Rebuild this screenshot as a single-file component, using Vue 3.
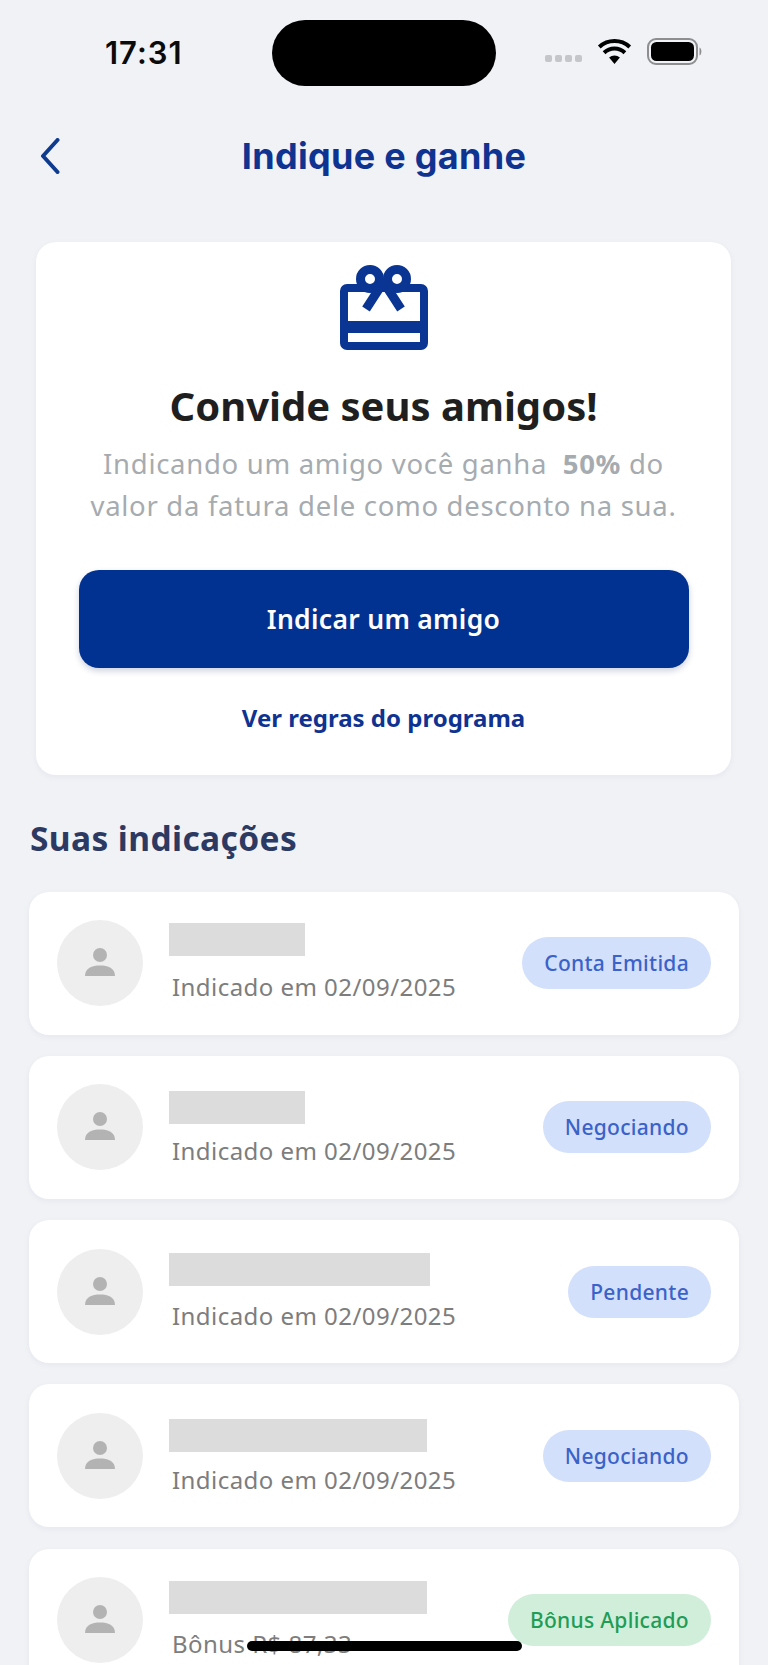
<script setup>
const items = [
  { id: 1, nameWidth: 136, nameShift: 0, sub: 'Indicado em 02/09/2025', badge: 'Conta Emitida', kind: 'blue' },
  { id: 2, nameWidth: 136, nameShift: 4, sub: 'Indicado em 02/09/2025', badge: 'Negociando', kind: 'blue' },
  { id: 3, nameWidth: 261, nameShift: 1, sub: 'Indicado em 02/09/2025', badge: 'Pendente', kind: 'blue' },
  { id: 4, nameWidth: 258, nameShift: 3, sub: 'Indicado em 02/09/2025', badge: 'Negociando', kind: 'blue' },
  { id: 5, nameWidth: 258, nameShift: 1, sub: 'Bônus R$ 87,33', badge: 'Bônus Aplicado', kind: 'green' }
]
</script>

<template>
  <div class="page">
    <div class="island"></div>
    <div class="status">
      <span class="time">17:31</span>
      <div class="status-right">
        <div class="dots"><i></i><i></i><i></i><i></i></div>
        <svg class="wifi" width="35" height="26" viewBox="0 0 34 26">
          <path d="M17 25 L11.600 18.600 A8 8 0 0 1 22.400 18.600 Z" fill="#000" />
          <path d="M6.600 13.800 A15 15 0 0 1 27.400 13.800" fill="none" stroke="#000" stroke-width="4" />
          <path d="M1.800 8 A22.500 22.500 0 0 1 32.200 8" fill="none" stroke="#000" stroke-width="4" />
        </svg>
        <svg class="battery" width="58" height="28" viewBox="0 0 56 28">
          <rect x="1" y="1" width="49" height="25" rx="8" fill="none" stroke="#8e8e90" stroke-width="2" />
          <rect x="4" y="4" width="43" height="19" rx="5.500" fill="#000" />
          <path d="M52.500 9.500 C55 10.500 55 16.500 52.500 17.500 Z" fill="#8e8e90" />
        </svg>
      </div>
    </div>

    <header class="nav">
      <svg class="back" width="20" height="36" viewBox="0 0 20 36">
        <path d="M17.500 2 L3 18 L17.500 34" fill="none" stroke="#0f3b8f" stroke-width="4" stroke-linecap="round" stroke-linejoin="round" />
      </svg>
      <h1 class="nav-title">Indique e ganhe</h1>
    </header>

    <section class="hero">
      <svg class="gift" width="90" height="86" viewBox="0 0 90 86">
        <path d="M8 19 H82 A7 7 0 0 1 89 26 V78 A7 7 0 0 1 82 85 H8 A7 7 0 0 1 1 78 V26 A7 7 0 0 1 8 19 Z M9 27 V56 H81 V27 Z M9 68 V77 H81 V68 Z" fill="#0a3593" fill-rule="evenodd" />
        <circle cx="31" cy="14" r="9.500" fill="#fff" stroke="#0a3593" stroke-width="9" />
        <circle cx="58" cy="14" r="9.500" fill="#fff" stroke="#0a3593" stroke-width="9" />
        <path d="M44.500 17 L27 44 M44.500 17 L62 44" stroke="#0a3593" stroke-width="9" fill="none" />
        <path d="M37 14 H52 L44.500 26 Z" fill="#0a3593" />
      </svg>
      <h2 class="hero-title">Convide seus amigos!</h2>
      <p class="hero-text">Indicando um amigo você ganha&nbsp; <b>50%</b> do<br />valor da fatura dele como desconto na sua.</p>
      <button class="cta">Indicar um amigo</button>
      <a class="rules">Ver regras do programa</a>
    </section>

    <h3 class="section-title">Suas indicações</h3>

    <div class="list">
      <article v-for="item in items" :key="item.id" class="row">
        <div class="avatar">
          <svg width="32" height="32" viewBox="0 0 32 32">
            <circle cx="16" cy="8" r="7" fill="#b3b3b3" />
            <path d="M1 29 C1 21 8 18.500 16 18.500 C24 18.500 31 21 31 29 Z" fill="#b3b3b3" />
          </svg>
        </div>
        <div class="info">
          <div class="redacted" :style="{ width: item.nameWidth + 'px', transform: 'translateY(' + item.nameShift + 'px)' }"></div>
          <div class="sub">{{ item.sub }}</div>
        </div>
        <span class="badge" :class="item.kind">{{ item.badge }}</span>
      </article>
    </div>

    <div class="home"></div>
  </div>
</template>

<style>
html, body { margin: 0; background: #f0f2f6; }
</style>

<style scoped>
.page {
  position: relative;
  width: 768px;
  height: 1665px;
  overflow: hidden;
  background: #f0f2f6;
  font-family: "Noto Sans", "Open Sans", sans-serif;
  box-sizing: border-box;
}
.island {
  position: absolute;
  left: 272px;
  top: 20px;
  width: 224px;
  height: 66px;
  border-radius: 33px;
  background: #000;
}
.status {
  display: flex;
  align-items: center;
  justify-content: space-between;
  height: 50px;
  padding: 27px 64px 0 105px;
}
.time {
  font-family: Inter, sans-serif;
  font-size: 31px;
  font-weight: 600;
  letter-spacing: 1px;
  color: #0b0b0b;
}
.status-right {
  display: flex;
  align-items: center;
}
.dots {
  display: flex;
  gap: 3px;
  margin-top: 12px;
  width: 52px;
}
.dots i {
  width: 7px;
  height: 7px;
  border-radius: 2px;
  background: #c4c6c9;
}
.wifi { margin-right: 14px; }
.nav {
  position: relative;
  display: flex;
  justify-content: center;
  align-items: center;
  height: 40px;
  margin-top: 59px;
}
.back {
  position: absolute;
  left: 40px;
  top: 2px;
}
.nav-title {
  margin: 0;
  font-family: Inter, sans-serif;
  font-size: 36px;
  font-weight: 700;
  letter-spacing: 0.3px;
  color: #0f3391;
}
.hero {
  display: flex;
  flex-direction: column;
  align-items: center;
  width: 695px;
  height: 533px;
  margin: 66px 0 0 36px;
  padding-top: 23px;
  box-sizing: border-box;
  background: #fff;
  border-radius: 20px;
  box-shadow: 0 2px 6px rgba(30, 40, 70, 0.05);
}
.hero-title {
  margin: 28px 0 0;
  font-size: 40px;
  line-height: 54px;
  font-weight: 700;
  color: #1f1f1f;
}
.hero-text {
  margin: 10px 0 0;
  font-size: 27.500px;
  line-height: 42px;
  text-align: center;
  color: #a6abb0;
  letter-spacing: 0.7px;
  white-space: nowrap;
}
.hero-text b { font-weight: 700; }
.cta {
  width: 610px;
  height: 98px;
  margin-top: 43px;
  border: 0;
  border-radius: 20px;
  background: #023291;
  color: #fff;
  font-family: inherit;
  font-size: 26.500px;
  font-weight: 600;
  letter-spacing: 0.3px;
  box-shadow: 0 3px 6px rgba(10, 30, 90, 0.2);
}
.rules {
  margin-top: 33px;
  font-size: 24px;
  line-height: 34px;
  font-weight: 700;
  color: #0f3391;
}
.section-title {
  margin: 41px 0 0 30px;
  font-size: 33.500px;
  line-height: 44px;
  font-weight: 700;
  letter-spacing: 0.4px;
  color: #2c3a63;
}
.list {
  display: flex;
  flex-direction: column;
  gap: 21.250px;
  margin: 31.600px 0 0 29px;
  width: 710px;
}
.row {
  flex: none;
  display: flex;
  align-items: center;
  height: 143px;
  padding: 0 28px;
  box-sizing: border-box;
  background: #fff;
  border-radius: 20px;
  box-shadow: 0 2px 6px rgba(30, 40, 70, 0.05);
}
.avatar {
  flex: none;
  display: flex;
  align-items: center;
  justify-content: center;
  width: 86px;
  height: 86px;
  border-radius: 50%;
  background: #eeeeee;
}
.info {
  flex: 1;
  margin-left: 26px;
  min-width: 0;
}
.redacted {
  height: 33px;
  background: #dcdcdc;
}
.sub {
  margin: 14px 0 0 3px;
  font-size: 24px;
  line-height: 33px;
  letter-spacing: 0.45px;
  color: #7d7d7d;
  white-space: nowrap;
}
.badge {
  flex: none;
  display: flex;
  align-items: center;
  height: 52px;
  padding: 0 22px;
  border-radius: 26px;
  font-size: 21px;
  font-weight: 500;
  letter-spacing: 0.3px;
  white-space: nowrap;
}
.badge.blue { background: #d3e0fb; color: #3a62c9; }
.badge.green { background: #d0eeda; color: #1f9c55; }
.home {
  position: absolute;
  left: 247px;
  top: 1641px;
  width: 275px;
  height: 10px;
  border-radius: 5px;
  background: #000;
}
</style>
